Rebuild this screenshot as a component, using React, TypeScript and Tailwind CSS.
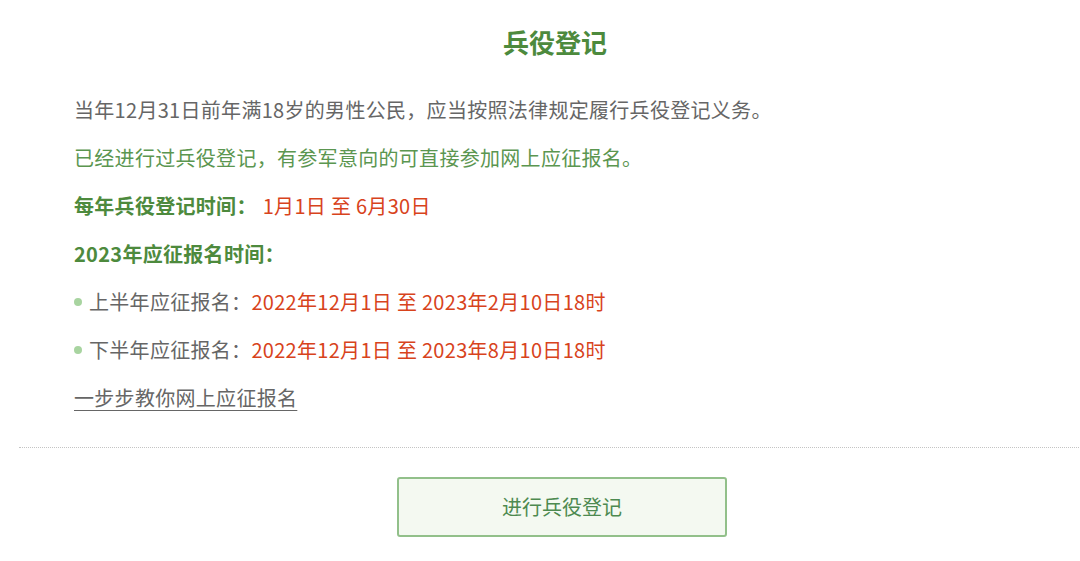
export default function App() {
  return (
    <main
      className="w-full min-h-screen bg-white pl-[19px] overflow-hidden"
      style={{ fontFamily: '"Noto Sans CJK SC", "Noto Sans", sans-serif' }}
    >
      <div className="w-[1072px] pt-[24px]">
        {/* title */}
        <h1 className="text-center text-[26px] leading-[36px] font-bold text-[#4d8a3d]">
          兵役登记
        </h1>

        {/* info block */}
        <section className="mt-[26px] pl-[55px] text-[20px] leading-[48px] tracking-[0.3px]">
          <p className="text-[#666666]">
            当年12月31日前年满18岁的男性公民，应当按照法律规定履行兵役登记义务。
          </p>
          <p className="text-[#5b9650]">
            已经进行过兵役登记，有参军意向的可直接参加网上应征报名。
          </p>
          <p>
            <span className="font-bold text-[#4d8a3d]">每年兵役登记时间：</span>
            <span className="ml-[6px] text-[#d8431c]">1月1日 至 6月30日</span>
          </p>
          <p className="font-bold text-[#4d8a3d]">2023年应征报名时间：</p>
          <div className="flex items-center">
            <span className="w-[8px] h-[8px] rounded-full bg-[#a8d4a0] mr-[7px]" />
            <span className="text-[#666666]">上半年应征报名：</span>
            <span className="text-[#d8431c]">2022年12月1日 至 2023年2月10日18时</span>
          </div>
          <div className="flex items-center">
            <span className="w-[8px] h-[8px] rounded-full bg-[#a8d4a0] mr-[7px]" />
            <span className="text-[#666666]">下半年应征报名：</span>
            <span className="text-[#d8431c]">2022年12月1日 至 2023年8月10日18时</span>
          </div>
          <p>
            <a href="#" className="text-[#666666] underline underline-offset-[4px] decoration-1">
              一步步教你网上应征报名
            </a>
          </p>
        </section>

        <hr className="mt-[25px] border-0 border-t border-dotted border-[#c4c4c4]" />

        {/* action */}
        <div className="pt-[29px] pl-[378px]">
          <button className="w-[330px] h-[60px] rounded-[3px] border-2 border-[#92c08a] bg-[#f4f9f1] text-[20px] text-[#4d8a50]">
            进行兵役登记
          </button>
        </div>
      </div>
    </main>
  );
}
